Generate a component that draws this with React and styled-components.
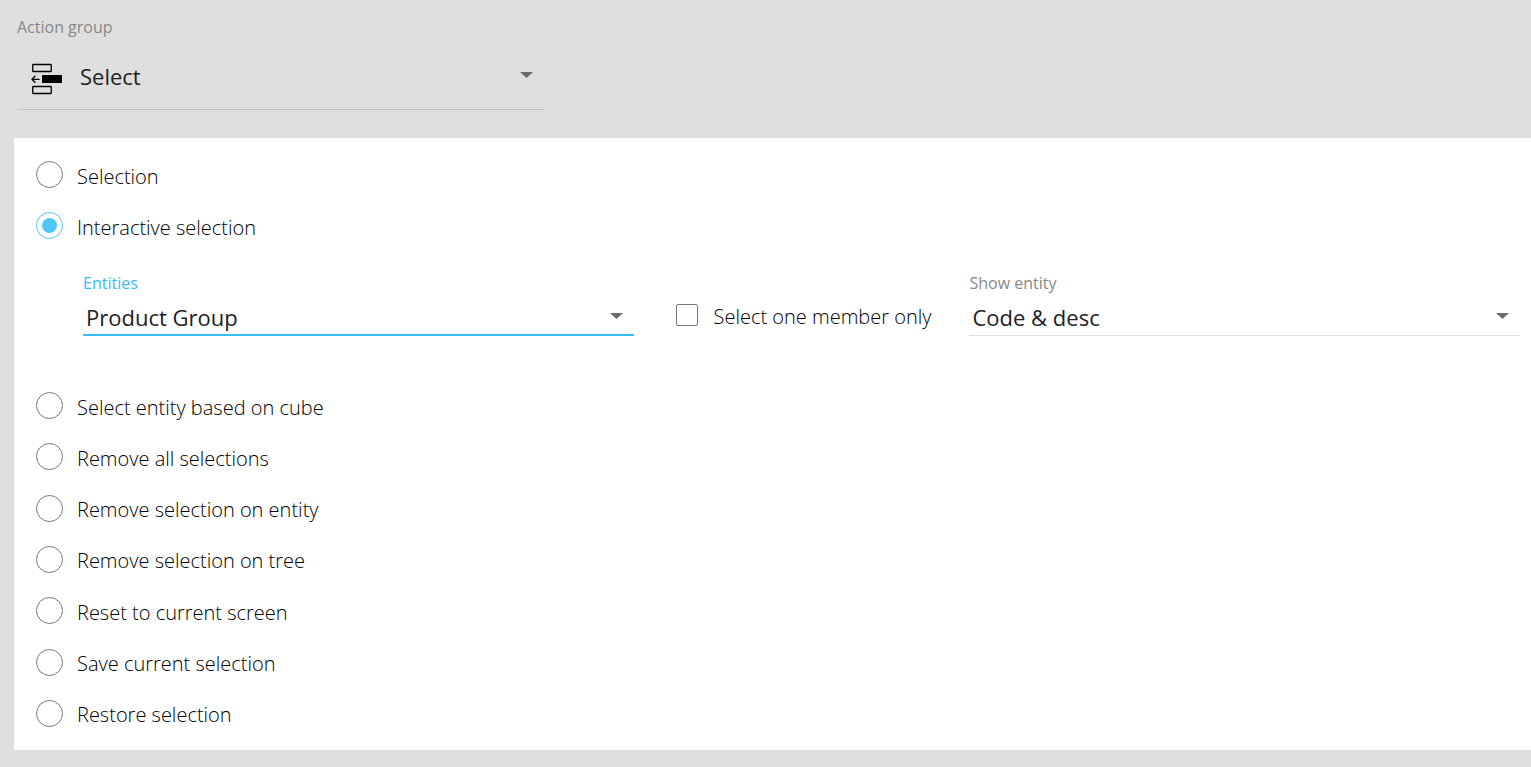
import React, { useState } from "react";
import styled, { createGlobalStyle } from "styled-components";

const GlobalStyle = createGlobalStyle`
  * {
    box-sizing: border-box;
  }
  body {
    margin: 0;
    background: #dfdfdf;
    color: #000;
    font-family: "Open Sans", "Noto Sans", sans-serif;
  }
`;

const Page = styled.main`
  padding-bottom: 17px;
`;

const Header = styled.header`
  padding: 16px 17px 28px;
`;

const Field = styled.div`
  display: flex;
  flex-direction: column;
  min-width: 0;
  max-width: ${(props) => props.$maxWidth || "none"};
`;

const FieldLabel = styled.label`
  font-size: 16px;
  line-height: 22px;
  color: ${(props) => (props.$active ? "#36bdf2" : "#888")};
`;

const SelectBox = styled.div`
  position: relative;
  display: flex;
  align-items: center;
  height: ${(props) => (props.$large ? "72px" : "42px")};
  padding: ${(props) => (props.$large ? "10px 0 0 14px" : props.$active ? "8px 0 0" : "6px 0 0")};
  border-bottom: ${(props) => (props.$active ? "2px solid #36bdf2" : "1px solid " + (props.$large ? "#c2c2c2" : "#dcdcdc"))};
`;

const Select = styled.select`
  flex: 1;
  min-width: 0;
  height: 32px;
  padding: 0 32px 2px 3px;
  border: 0;
  outline: 0;
  appearance: none;
  background: transparent;
  color: #222;
  font-family: inherit;
  font-size: 22px;
  line-height: 30px;
`;

const LargeSelect = styled(Select)`
  height: 36px;
  padding-bottom: 6px;
`;

const Caret = styled.svg`
  position: absolute;
  right: 11px;
  top: ${(props) => (props.$large ? "34px" : "19px")};
  width: 13px;
  height: 6px;
  fill: #6b6b6b;
  pointer-events: none;
`;

const ActionIcon = styled.svg`
  flex: none;
  width: 32px;
  height: 32px;
  margin-right: 14px;
`;

const Panel = styled.section`
  margin-left: 14px;
  padding: 11px 11px 11px 22px;
  background: #fff;
`;

const OptionList = styled.div`
  display: grid;
  grid-auto-rows: 1fr;
  min-height: ${(props) => props.$minHeight};
`;

const Option = styled.label`
  display: flex;
  align-items: center;
  gap: 14px;
  font-size: 20px;
  font-weight: 300;
  line-height: 26px;
`;

const OptionText = styled.span`
  padding-top: 4px;
`;

const Radio = styled.input`
  flex: none;
  display: grid;
  place-items: center;
  width: 27px;
  height: 27px;
  margin: 0;
  appearance: none;
  border: 1px solid #777;
  border-radius: 50%;
  &:checked {
    border-color: #4fc6f3;
  }
  &:checked::before {
    content: "";
    width: 15px;
    height: 15px;
    border-radius: 50%;
    background: #4fc6f3;
  }
`;

const Checkbox = styled.input`
  flex: none;
  display: grid;
  place-items: center;
  width: 22px;
  height: 22px;
  margin: 0;
  appearance: none;
  border: 1px solid #777;
  border-radius: 2px;
  &:checked::before {
    content: "";
    width: 12px;
    height: 12px;
    background: #4fc6f3;
  }
`;

const Settings = styled.div`
  display: grid;
  grid-template-columns: 1fr auto 1fr;
  column-gap: 38px;
  padding: 21px 0 44px 47px;
`;

const CheckOption = styled(Option)`
  align-self: end;
  gap: 16px;
  padding: 0 0 6px 4px;
`;

const before = ["Selection", "Interactive selection"];
const after = [
  "Select entity based on cube",
  "Remove all selections",
  "Remove selection on entity",
  "Remove selection on tree",
  "Reset to current screen",
  "Save current selection",
  "Restore selection",
];

const SelectField = ({ id, label, value, active, large, maxWidth, icon }) => {
  const Control = large ? LargeSelect : Select;

  return (
    <Field $maxWidth={maxWidth}>
      <FieldLabel htmlFor={id} $active={active}>{label}</FieldLabel>
      <SelectBox $active={active} $large={large}>
        {icon}
        <Control id={id} defaultValue={value}>
          <option value={value}>{value}</option>
        </Control>
        <Caret $large={large} viewBox="0 0 13 6" aria-hidden="true">
          <path d="M0 0h13L6.5 6z" />
        </Caret>
      </SelectBox>
    </Field>
  );
};

const Options = ({ items, selected, onSelect, minHeight }) => {
  return (
    <OptionList $minHeight={minHeight}>
      {items.map((item) => (
        <Option key={item}>
          <Radio type="radio" name="action" checked={selected === item} onChange={() => onSelect(item)} />
          <OptionText>{item}</OptionText>
        </Option>
      ))}
    </OptionList>
  );
};

const SelectIcon = () => (
  <ActionIcon viewBox="0 0 32 32" fill="none" stroke="#000" aria-hidden="true">
    <rect x="1.75" y="1.5" width="18.5" height="7" rx="0.5" strokeWidth="1.3" />
    <rect x="1.75" y="23.5" width="18.5" height="7" rx="0.5" strokeWidth="1.3" />
    <rect x="11" y="12" width="20" height="8" rx="0.5" fill="#000" stroke="none" />
    <path d="M8.5 16.3H1.2M4.4 12.8L1 16.3l3.4 3.5" strokeWidth="1.3" />
  </ActionIcon>
);

const App = () => {
  const [selected, setSelected] = useState("Interactive selection");

  return (
    <Page>
      <GlobalStyle />
      <Header>
        <SelectField id="group" label="Action group" value="Select" maxWidth="527px" large icon={<SelectIcon />} />
      </Header>
      <Panel>
        <Options items={before} selected={selected} onSelect={setSelected} minHeight="102px" />
        <Settings>
          <SelectField id="entities" label="Entities" value="Product Group" active />
          <CheckOption>
            <Checkbox type="checkbox" />
            <OptionText>Select one member only</OptionText>
          </CheckOption>
          <SelectField id="show" label="Show entity" value="Code & desc" />
        </Settings>
        <Options items={after} selected={selected} onSelect={setSelected} minHeight="359px" />
      </Panel>
    </Page>
  );
};

export default App;
